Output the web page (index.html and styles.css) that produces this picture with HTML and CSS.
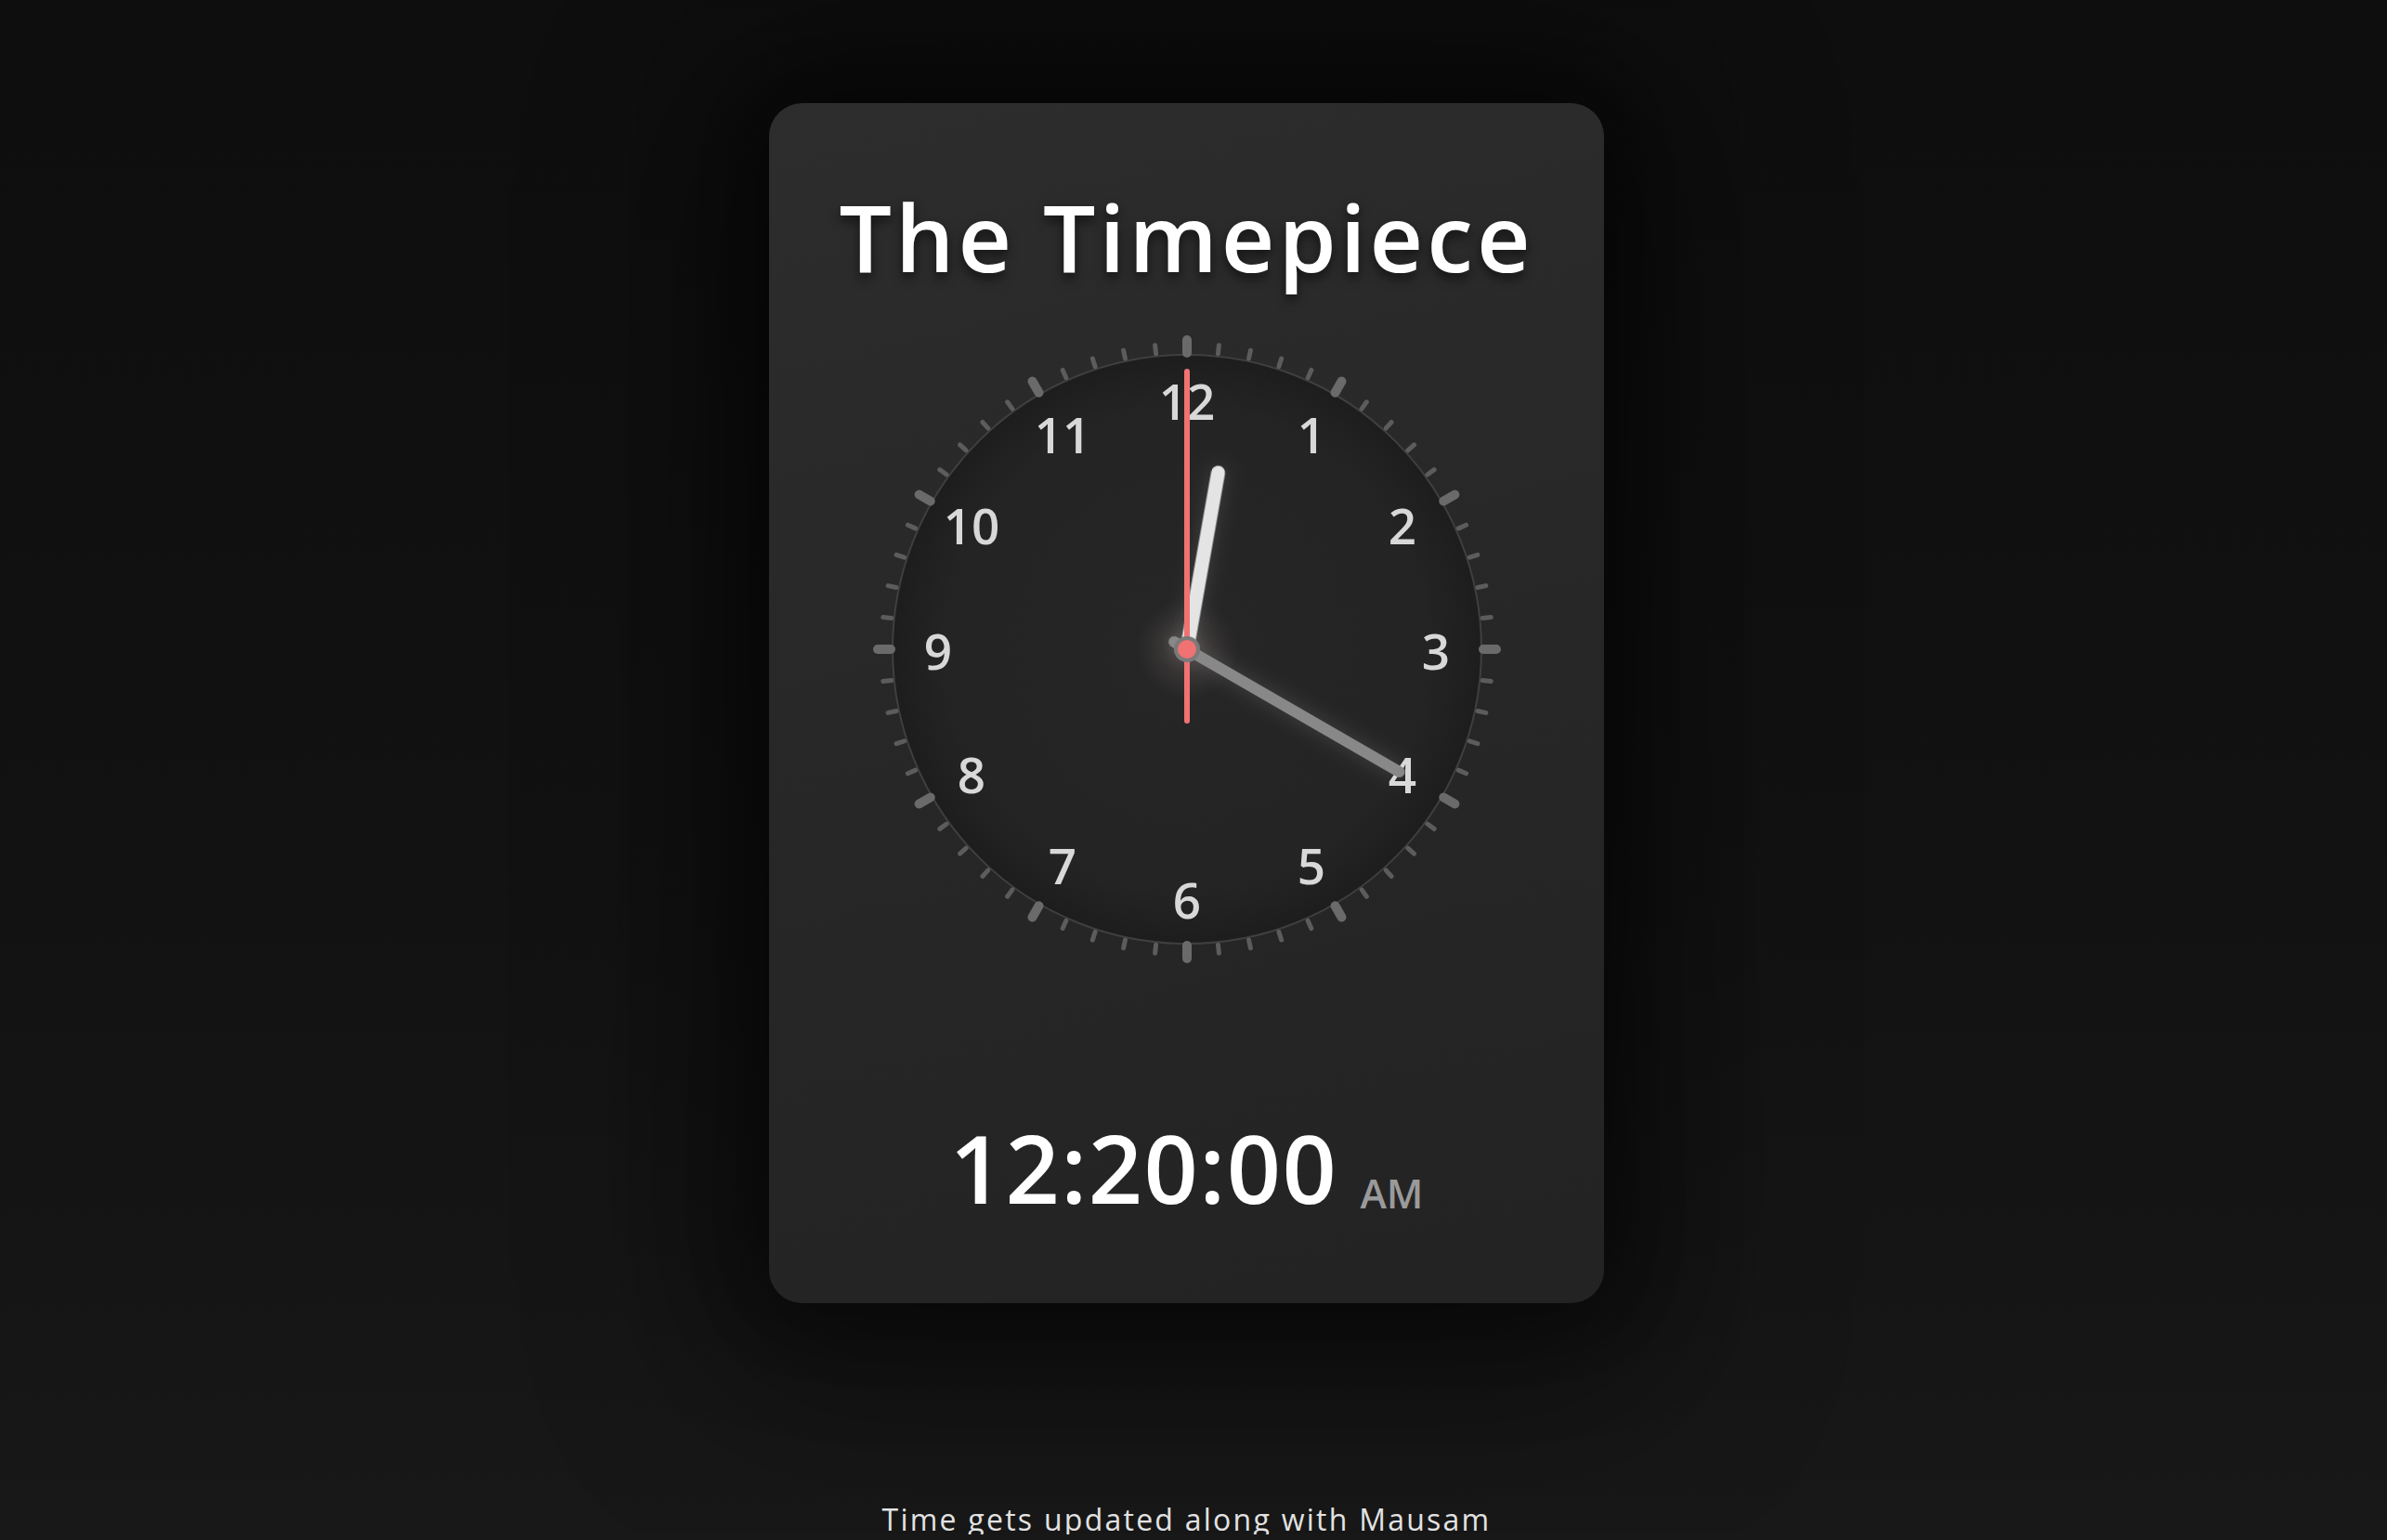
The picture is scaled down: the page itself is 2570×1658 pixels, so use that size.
FILE: index.html
```html
<!DOCTYPE html>
<html lang="en">
<head>
<meta charset="utf-8">
<title>The Timepiece</title>
<link rel="stylesheet" href="styles.css">
</head>
<body>
<main class="page">
  <section class="card">
    <h1 class="title">The Timepiece</h1>
    <div class="clock">
      <svg class="dial" viewBox="-350 -350 700 700" width="700" height="700">
        <defs>
          <radialGradient id="faceGrad" cx="0" cy="0" r="317" gradientUnits="userSpaceOnUse">
            <stop offset="0" stop-color="#262626"/>
            <stop offset="0.82" stop-color="#242424"/>
            <stop offset="1" stop-color="#1d1d1d"/>
          </radialGradient>
          <radialGradient id="glowGrad" cx="0" cy="0" r="55" gradientUnits="userSpaceOnUse">
            <stop offset="0" stop-color="#f0c8c8" stop-opacity="0.16"/>
            <stop offset="1" stop-color="#f0c8c8" stop-opacity="0"/>
          </radialGradient>
          <line id="tm" class="tick-minor" x1="0" y1="-320" x2="0" y2="-329"/>
          <line id="tj" class="tick-major" x1="0" y1="-319" x2="0" y2="-333"/>
        </defs>
        <circle class="face" cx="0" cy="0" r="317"/>
        <g class="ticks">
          <use href="#tj" transform="rotate(0)"/><use href="#tm" transform="rotate(6)"/><use href="#tm" transform="rotate(12)"/><use href="#tm" transform="rotate(18)"/><use href="#tm" transform="rotate(24)"/>
          <use href="#tj" transform="rotate(30)"/><use href="#tm" transform="rotate(36)"/><use href="#tm" transform="rotate(42)"/><use href="#tm" transform="rotate(48)"/><use href="#tm" transform="rotate(54)"/>
          <use href="#tj" transform="rotate(60)"/><use href="#tm" transform="rotate(66)"/><use href="#tm" transform="rotate(72)"/><use href="#tm" transform="rotate(78)"/><use href="#tm" transform="rotate(84)"/>
          <use href="#tj" transform="rotate(90)"/><use href="#tm" transform="rotate(96)"/><use href="#tm" transform="rotate(102)"/><use href="#tm" transform="rotate(108)"/><use href="#tm" transform="rotate(114)"/>
          <use href="#tj" transform="rotate(120)"/><use href="#tm" transform="rotate(126)"/><use href="#tm" transform="rotate(132)"/><use href="#tm" transform="rotate(138)"/><use href="#tm" transform="rotate(144)"/>
          <use href="#tj" transform="rotate(150)"/><use href="#tm" transform="rotate(156)"/><use href="#tm" transform="rotate(162)"/><use href="#tm" transform="rotate(168)"/><use href="#tm" transform="rotate(174)"/>
          <use href="#tj" transform="rotate(180)"/><use href="#tm" transform="rotate(186)"/><use href="#tm" transform="rotate(192)"/><use href="#tm" transform="rotate(198)"/><use href="#tm" transform="rotate(204)"/>
          <use href="#tj" transform="rotate(210)"/><use href="#tm" transform="rotate(216)"/><use href="#tm" transform="rotate(222)"/><use href="#tm" transform="rotate(228)"/><use href="#tm" transform="rotate(234)"/>
          <use href="#tj" transform="rotate(240)"/><use href="#tm" transform="rotate(246)"/><use href="#tm" transform="rotate(252)"/><use href="#tm" transform="rotate(258)"/><use href="#tm" transform="rotate(264)"/>
          <use href="#tj" transform="rotate(270)"/><use href="#tm" transform="rotate(276)"/><use href="#tm" transform="rotate(282)"/><use href="#tm" transform="rotate(288)"/><use href="#tm" transform="rotate(294)"/>
          <use href="#tj" transform="rotate(300)"/><use href="#tm" transform="rotate(306)"/><use href="#tm" transform="rotate(312)"/><use href="#tm" transform="rotate(318)"/><use href="#tm" transform="rotate(324)"/>
          <use href="#tj" transform="rotate(330)"/><use href="#tm" transform="rotate(336)"/><use href="#tm" transform="rotate(342)"/><use href="#tm" transform="rotate(348)"/><use href="#tm" transform="rotate(354)"/>
        </g>
        <g class="numbers">
          <text x="0" y="-247">12</text>
          <text x="134" y="-211">1</text>
          <text x="232" y="-113">2</text>
          <text x="268" y="22">3</text>
          <text x="232" y="155">4</text>
          <text x="134" y="253">5</text>
          <text x="0" y="290">6</text>
          <text x="-134" y="253">7</text>
          <text x="-232" y="155">8</text>
          <text x="-268" y="22">9</text>
          <text x="-232" y="-113">10</text>
          <text x="-134" y="-211">11</text>
        </g>
        <circle class="glow" cx="0" cy="0" r="55"/>
        <line class="hand-hour" x1="0" y1="0" x2="0" y2="-193" transform="rotate(10)"/>
        <line class="hand-minute" x1="0" y1="16" x2="0" y2="-264" transform="rotate(120)"/>
        <line class="hand-second" x1="0" y1="77" x2="0" y2="-299"/>
        <circle class="cap-ring" cx="0" cy="0" r="14"/>
        <circle class="cap-dot" cx="0" cy="0" r="10"/>
      </svg>
    </div>
    <div class="digital"><span class="digital-time">12:20:00</span><span class="digital-ampm">AM</span></div>
  </section>
  <p class="footer-note">Time gets updated along with Mausam</p>
</main>
</body>
</html>
```

FILE: styles.css
```css
html {
  background: linear-gradient(to bottom, #0e0e0e 0%, #121212 60%, #181818 100%);
  min-height: 100%;
}

body {
  margin: 0;
  font-family: "Open Sans", "Noto Sans", sans-serif;
  color: #ffffff;
}

.page {
  display: flex;
  flex-direction: column;
  align-items: center;
  padding: 111px 15px 0 0;
}

.card {
  width: 899px;
  box-sizing: border-box;
  padding: 93px 0 94px;
  border-radius: 36px;
  background: linear-gradient(165deg, #2d2d2d 0%, #272727 50%, #232323 100%);
  box-shadow: 0 0 110px 30px rgba(0, 0, 0, 0.45), 0 30px 200px 60px rgba(0, 0, 0, 0.4);
  display: flex;
  flex-direction: column;
  align-items: center;
}

.title {
  margin: 0;
  font-size: 100px;
  line-height: 100px;
  font-weight: 600;
  letter-spacing: 4px;
  color: #ffffff;
  text-shadow: 0 6px 12px rgba(0, 0, 0, 0.55);
}

.clock {
  margin-top: 45px;
  width: 700px;
  height: 700px;
}

.dial {
  display: block;
}

.face {
  fill: url(#faceGrad);
  stroke: #3f3f3f;
  stroke-width: 2;
}

.tick-minor {
  stroke: #5c5c5c;
  stroke-width: 5;
  stroke-linecap: round;
}

.tick-major {
  stroke: #6a6a6a;
  stroke-width: 10;
  stroke-linecap: round;
}

.numbers text {
  font-family: "Open Sans", "Noto Sans", sans-serif;
  font-size: 53px;
  font-weight: 600;
  fill: #d8d8d8;
  text-anchor: middle;
}

.glow {
  fill: url(#glowGrad);
}

.hand-hour {
  stroke: #e4e4e4;
  stroke-width: 15;
  stroke-linecap: round;
  filter: drop-shadow(0 0 10px rgba(255, 255, 255, 0.14));
}

.hand-minute {
  stroke: #888888;
  stroke-width: 12;
  stroke-linecap: round;
  filter: drop-shadow(0 0 10px rgba(255, 255, 255, 0.16));
}

.hand-second {
  stroke: #f07272;
  stroke-width: 6;
  stroke-linecap: round;
}

.cap-ring {
  fill: #7a7a7a;
}

.cap-dot {
  fill: #f07272;
}

.digital {
  margin-top: 156px;
  height: 104px;
  font-size: 0;
  line-height: 104px;
  text-align: center;
  white-space: nowrap;
}

.digital-time {
  font-size: 102px;
  font-weight: 600;
  letter-spacing: 1.5px;
  color: #ffffff;
}

.digital-ampm {
  margin-left: 24px;
  font-size: 43px;
  font-weight: 600;
  color: #9a9a9a;
  vertical-align: -5px;
}

.footer-note {
  margin: 217px 0 0;
  font-size: 32px;
  line-height: 32px;
  font-weight: 500;
  letter-spacing: 2.25px;
  color: #e2e2e2;
}
```
